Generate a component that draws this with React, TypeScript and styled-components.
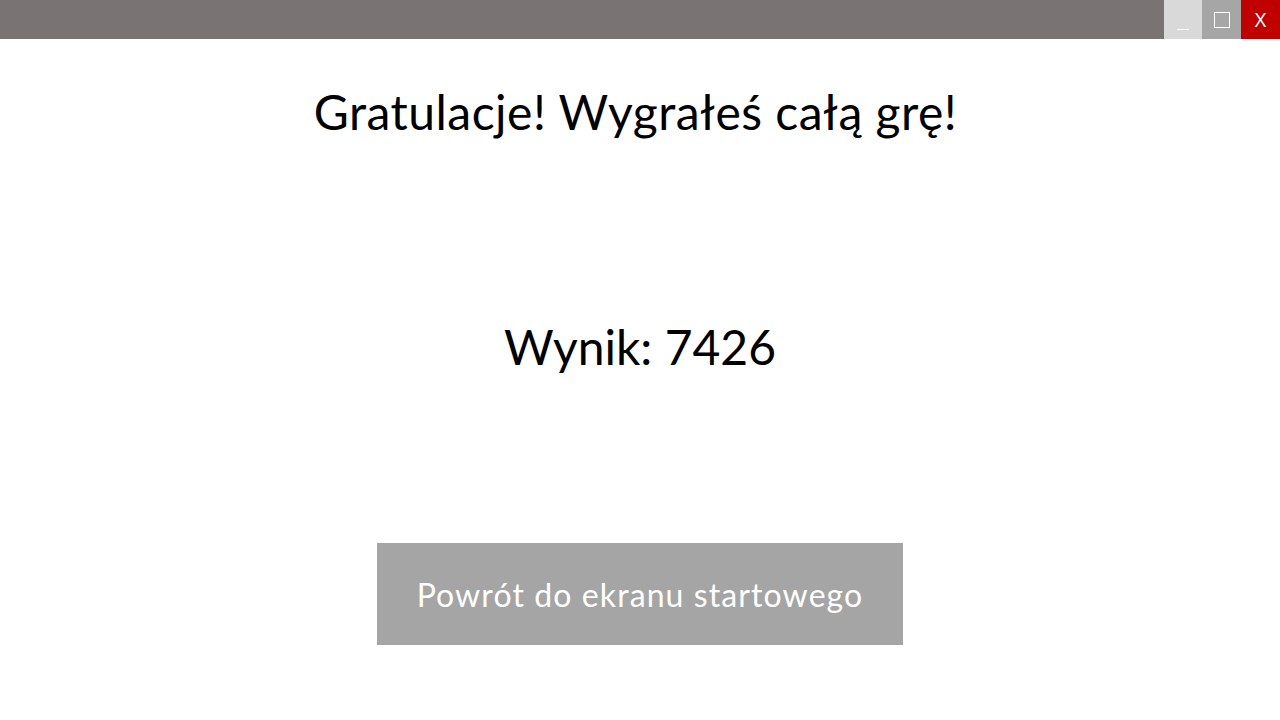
import React from "react";
import styled, { createGlobalStyle } from "styled-components";

const Global = createGlobalStyle`
  html, body { margin: 0; padding: 0; background: #ffffff; }
  body { font-family: Lato, "Open Sans", sans-serif; }
`;

const Page = styled.div`
  width: 1280px;
  height: 720px;
  display: flex;
  flex-direction: column;
  background: #ffffff;
  overflow: hidden;
`;

const TitleBar = styled.div`
  height: 39px;
  background: #797373;
  display: flex;
  justify-content: flex-end;
  flex-shrink: 0;
`;

const WinButton = styled.div<{ $bg: string; $w?: number }>`
  width: ${(p) => p.$w ?? 39}px;
  height: 39px;
  background: ${(p) => p.$bg};
  display: flex;
  align-items: center;
  justify-content: center;
  position: relative;
  color: #ffffff;
  font-family: "Open Sans", sans-serif;
  font-size: 20px;
`;

const Underscore = styled.div`
  position: absolute;
  left: 13px;
  top: 29px;
  width: 12px;
  height: 1px;
  background: #ffffff;
`;

const Square = styled.div`
  width: 14px;
  height: 14px;
  border: 1px solid #ffffff;
`;

const Content = styled.main`
  flex: 1;
  display: flex;
  flex-direction: column;
  align-items: center;
`;

const Heading = styled.h1`
  margin: 43px 9px 0 0;
  font-family: Lato, sans-serif;
  font-weight: 400;
  font-size: 48px;
  line-height: 60px;
  letter-spacing: 0.5px;
  color: #000000;
`;

const Score = styled.div`
  margin-top: 175px;
  font-family: Lato, sans-serif;
  font-size: 48px;
  line-height: 60px;
  color: #000000;
`;

const BackButton = styled.button`
  margin-top: 166px;
  width: 526px;
  height: 102px;
  border: none;
  background: #a5a5a5;
  color: #ffffff;
  font-family: Lato, sans-serif;
  font-size: 32px;
  letter-spacing: 1.1px;
  display: flex;
  align-items: center;
  justify-content: center;
  cursor: pointer;
  padding: 0;
`;

export default function App() {
  return (
    <>
      <Global />
      <Page>
        <TitleBar>
          <WinButton $bg="#d9d9d9" $w={38}>
            <Underscore />
          </WinButton>
          <WinButton $bg="#a6a6a6">
            <Square />
          </WinButton>
          <WinButton $bg="#c00000">X</WinButton>
        </TitleBar>
        <Content>
          <Heading>Gratulacje! Wygrałeś całą grę!</Heading>
          <Score>Wynik: 7426</Score>
          <BackButton>Powrót do ekranu startowego</BackButton>
        </Content>
      </Page>
    </>
  );
}
